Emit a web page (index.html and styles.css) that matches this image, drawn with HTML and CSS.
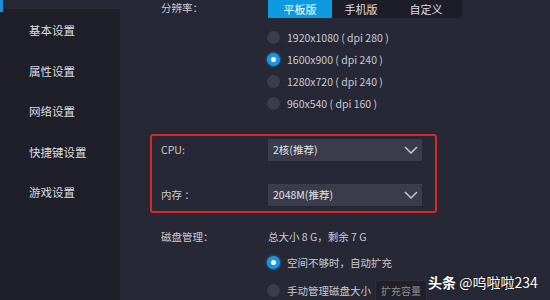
FILE: index.html
```html
<!DOCTYPE html>
<html lang="zh-CN">
<head>
  <meta charset="UTF-8">
  <title>设置</title>
  <link rel="stylesheet" href="styles.css">
</head>
<body>
  <div class="top-mark"></div>
  <div class="app">
    <ul class="side">
      <li>基本设置</li>
      <li>属性设置</li>
      <li>网络设置</li>
      <li>快捷键设置</li>
      <li>游戏设置</li>
    </ul>

    <div class="main">
      <!-- 分辨率 -->
      <div class="row tab-row">
        <span class="label">分辨率：</span>
        <div class="tabs">
          <button class="tab on">平板版</button>
          <button class="tab">手机版</button>
          <button class="tab">自定义</button>
        </div>
      </div>

      <ul class="radios res-list">
        <li><span class="radio"></span>1920x1080 ( dpi 280 )</li>
        <li><span class="radio on"></span>1600x900 ( dpi 240 )</li>
        <li><span class="radio"></span>1280x720 ( dpi 240 )</li>
        <li><span class="radio"></span>960x540 ( dpi 160 )</li>
      </ul>

      <!-- CPU / 内存 -->
      <div class="hl-box">
        <div class="row sel-row">
          <span class="label">CPU:</span>
          <div class="select">2核(推荐)
            <svg class="arrow" width="14" height="8" viewBox="0 0 14 8"><polyline points="1,1 7,7 13,1" /></svg>
          </div>
        </div>
        <div class="row sel-row second">
          <span class="label">内存 ：</span>
          <div class="select">2048M(推荐)
            <svg class="arrow" width="14" height="8" viewBox="0 0 14 8"><polyline points="1,1 7,7 13,1" /></svg>
          </div>
        </div>
      </div>

      <!-- 磁盘 -->
      <div class="row disk-row">
        <span class="label">磁盘管理：</span>
        <span class="value">总大小 8 G，剩余 7 G</span>
      </div>
      <ul class="radios disk-list">
        <li><span class="radio on"></span>空间不够时，自动扩充</li>
        <li class="manual"><span class="radio"></span>手动管理磁盘大小<button class="btn-expand">扩充容量</button></li>
      </ul>
    </div>
  </div>

  <div class="watermark"><b>头条</b> @呜啦啦234</div>
</body>
</html>
```

FILE: styles.css
```css
html,
body {
  margin: 0;
  padding: 0;
  height: 100%;
}

body {
  background: #272835;
  color: #c9cad2;
  font-family: "Noto Sans CJK SC", "Noto Sans", sans-serif;
  font-size: 10.5px;
  position: relative;
  overflow: hidden;
}

ul,
li {
  list-style: none;
  margin: 0;
  padding: 0;
}

button {
  font: inherit;
  border: none;
  cursor: pointer;
}

/* 좌상단 파란 조각 */
.top-mark {
  position: absolute;
  top: 0;
  left: 0;
  width: 3px;
  height: 12px;
  background: #1d8fd6;
}

.app {
  display: flex;
  height: 100%;
}

/* 사이드 메뉴 */
.side {
  width: 120px;
  margin-top: 9px;
  background: #1e1f28;
  flex-shrink: 0;
  padding-top: 11px;
}

.side li {
  height: 40.5px;
  line-height: 20px;
  padding-left: 29px;
  font-size: 11.5px;
  color: #dcdde2;
}

/* 본문 */
.main {
  flex: 1;
  padding-left: 41px;
}

.row {
  display: flex;
  align-items: center;
}

.label {
  width: 107px;
  flex-shrink: 0;
}

.tab-row {
  height: 18px;
  align-items: flex-start;
}

.tab-row .label {
  line-height: 16px;
}

.tabs {
  display: flex;
  background: #1c1d26;
}

.tab {
  height: 18px;
  width: 64px;
  background: transparent;
  color: #dcdde3;
  font-size: 11px;
  padding: 0;
  line-height: 18px;
}

.tab + .tab {
  width: 58px;
}

.tab:last-child {
  width: 72px;
}

.tab.on {
  background: #0e9ae0;
  color: #fff;
}

/* 라디오 */
.radios li {
  height: 22px;
  display: flex;
  align-items: center;
  padding-left: 107px;
}

.res-list {
  margin-top: 8px;
}

.radio {
  width: 13px;
  height: 13px;
  border-radius: 50%;
  background: #3b3d4a;
  margin-right: 7px;
  margin-left: -1px;
  box-sizing: border-box;
}

.radio.on {
  background: #fff;
  border: 4px solid #1a96e2;
  box-shadow: 0 0 2px 1px rgba(26, 150, 226, 0.45);
}

/* 빨간 박스 */
.hl-box {
  margin-top: 20px;
  margin-left: -11px;
  width: 287px;
  box-sizing: border-box;
  border: 2px solid #de252c;
  border-radius: 3px;
  padding: 3px 0 5px 9px;
}

.sel-row {
  height: 22px;
}

.sel-row.second {
  margin-top: 23px;
}

.sel-row .label {
  margin-top: -2px;
}

.select {
  position: relative;
  width: 154px;
  height: 22px;
  line-height: 22px;
  background: #3a3c4b;
  color: #e1e2e8;
  padding-left: 5px;
  box-sizing: border-box;
}

/* 화살표 */
.arrow {
  position: absolute;
  right: 4px;
  top: 7px;
  fill: none;
  stroke: #c6c7cf;
  stroke-width: 1.5;
}

/* 디스크 */
.disk-row {
  height: 16px;
  margin-top: 15px;
}

.disk-list {
  margin-top: 7px;
}

.disk-list .manual {
  margin-top: 6px;
}

.btn-expand {
  margin-left: 4px;
  height: 21px;
  width: 52px;
  background: #1f2029;
  border: 1px solid #2c2e3a;
  color: #8e9098;
  font-size: 10px;
  padding: 0;
}

/* 워터마크 */
.watermark {
  position: absolute;
  left: 428px;
  top: 273px;
  color: #fff;
  font-size: 14px;
  line-height: 18px;
  text-shadow: 0 0 2px rgba(0, 0, 0, 0.6);
}

.watermark b {
  font-weight: 700;
}
```
